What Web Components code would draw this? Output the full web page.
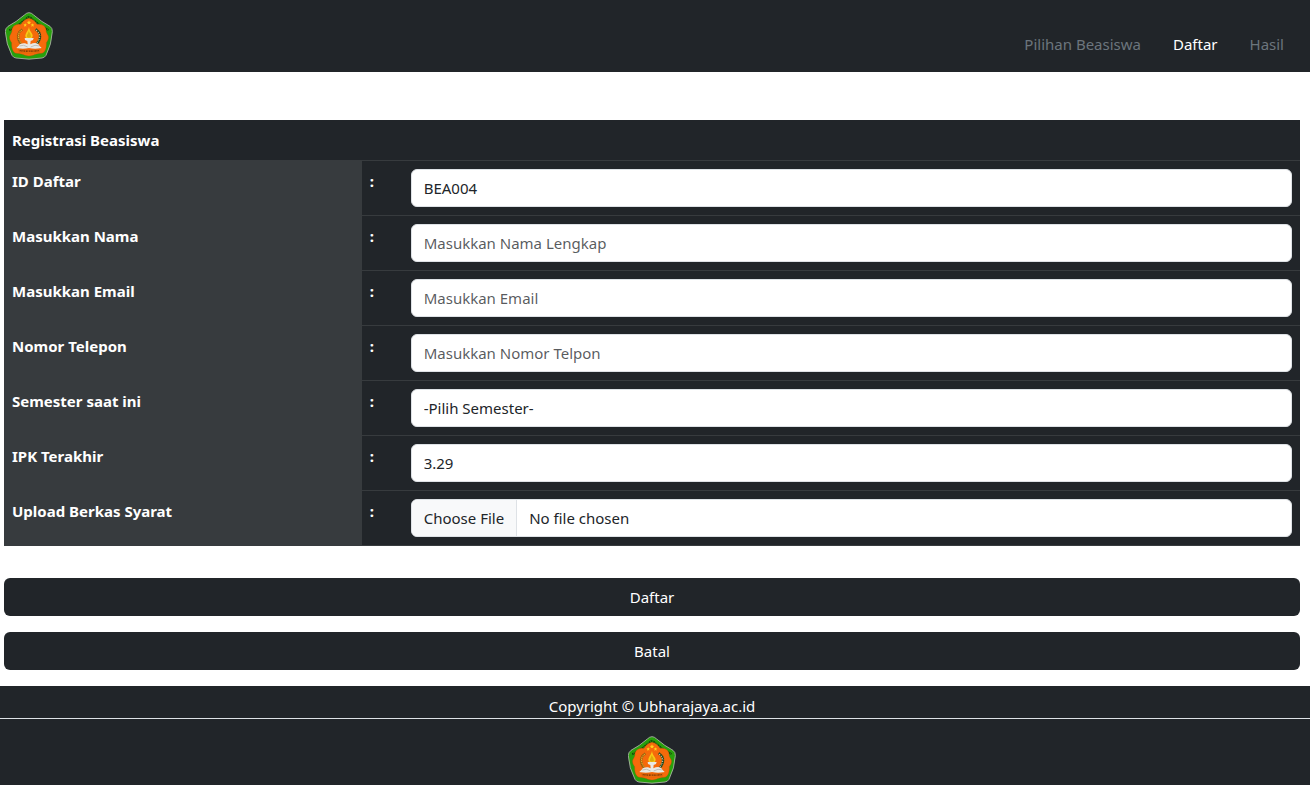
<!DOCTYPE html>
<html lang="id">
<head>
<meta charset="utf-8">
<meta name="viewport" content="width=device-width, initial-scale=1">
<title>Registrasi Beasiswa</title>
<style>
  body {
    margin: 0;
    background: #fff;
    color: #212529;
    font: 15px/24px "Noto Sans", "Open Sans", sans-serif;
    --dark: #212529;
    --panel: #373b3e;
    --line: #dee2e6;
    --muted: #6c757d;
  }
  main { padding: 48px 10px 16px 4px; }
</style>
</head>
<body>
<site-header>
  <nav-link href="#pilihan">Pilihan Beasiswa</nav-link>
  <nav-link href="#daftar" active>Daftar</nav-link>
  <nav-link href="#hasil">Hasil</nav-link>
</site-header>
<main>
  <registration-form><span slot="title">Registrasi Beasiswa</span></registration-form>
</main>
<site-footer>Copyright © Ubharajaya.ac.id</site-footer>

<script>
class BaseElement extends HTMLElement {
  constructor() {
    super();
    const t = document.createElement('template');
    t.innerHTML = '<style>*{box-sizing:border-box}</style>' + this.constructor.markup;
    this.attachShadow({ mode: 'open' }).append(t.content.cloneNode(true));
  }
}

class UniversityCrest extends BaseElement {
  static markup = `
  <style>:host{display:block;width:48px;height:48px} svg{display:block;width:100%;height:100%}</style>
  <svg viewBox="14 35 144 144" role="img" aria-label="Ubhara Jaya" fill="none">
    <path d="M86 37Q93 37 100 44Q124 65 149 78Q157 84 156 94Q154 132 137 165Q133 172 125 173Q86 180 47 173Q39 172 35 165Q17 132 15 94Q15 84 23 78Q48 65 72 44Q79 37 86 37Z" fill="#28a00c" stroke="#b4b5ae" stroke-width="2.5"/>
    <path d="M27 90Q60 72 86 48Q112 72 146 90" stroke="#143e0b" stroke-width="6" stroke-dasharray="4 2 2 2 5 2"/>
    <path d="M86 54C97 56 106 63 110 72C122 70 135 76 137 87C136 94 140 100 144 107C146 116 142 121 138 127C139 141 135 156 125 159C113 159 105 162 98 165C90 168 82 168 74 165C67 162 59 159 47 159C37 156 33 141 34 127C30 121 26 116 28 107C32 100 36 94 35 87C37 76 50 70 62 72C66 63 75 56 86 54Z" fill="#f56a0b" stroke="#a64f09" stroke-width="1"/>
    <path d="M86 60l2 4 5 1-4 3 1 4-4-2-4 2 1-4-4-3 5-1zM75 69l1 3 4 1-3 2 1 4-3-2-4 2 1-4-3-2 4-1zM97 69l1 3 4 1-3 2 1 4-3-2-4 2 1-4-3-2 4-1z" fill="#ffd01c"/>
    <path d="M66 88C50 96 49 116 63 131" stroke="#8b5d12" stroke-width="7" stroke-dasharray="4 1"/>
    <path d="M65 89C51 97 51 115 63 128" stroke="#e2b62a" stroke-width="3" stroke-dasharray="4 2"/>
    <path d="M106 87C123 96 123 116 109 131" stroke="#164c25" stroke-width="7" stroke-dasharray="5 1"/>
    <path d="M107 89C121 98 120 115 110 128" stroke="#e9e8d8" stroke-width="3" stroke-dasharray="3 5"/>
    <path d="M86 79C84 91 75 98 75 107Q75 115 86 116Q98 114 97 105C96 97 87 92 86 79Z" fill="#f7c817"/>
    <path d="M85 93C83 101 79 103 80 109Q85 115 92 109Q92 102 85 93Z" fill="#d9a90c"/>
    <path d="M73 113H100L98 119L91 122L90 132C101 126 114 127 117 136L124 143Q105 147 86 143Q67 147 48 143L55 136C60 127 75 127 82 132L81 122L74 119Z" fill="#e8e9e4"/>
    <path d="M57 137Q70 131 82 140M117 137Q104 131 91 140" stroke="#aaa9a3" stroke-width="2"/>
    <path d="M54 146Q86 152 119 146L117 156Q86 161 57 156Z" fill="#ef720c" stroke="#c85408" stroke-width="1"/>
    <path d="M58 151Q86 154 116 151" stroke="#6b2c05" stroke-width="4" stroke-dasharray="3 2 4 1 2 2"/>
  </svg>`;
}
customElements.define('university-crest', UniversityCrest);

class NavLink extends BaseElement {
  static markup = `
  <style>
    :host{display:block}
    a{display:block;padding:8px 16px;color:var(--muted);text-decoration:none}
    :host([active]) a{color:#fff}
  </style><a><slot></slot></a>`;
  connectedCallback() {
    const link = this.shadowRoot.querySelector('a');
    link.href = this.getAttribute('href');
    if (this.hasAttribute('active')) link.setAttribute('aria-current', 'page');
  }
}
customElements.define('nav-link', NavLink);

class SiteHeader extends BaseElement {
  static markup = `
  <style>
    :host{display:block;background:var(--dark)}
    header{display:flex;justify-content:space-between;padding:12px 10px 12px 5px}
    nav{display:flex;align-self:flex-end;margin-bottom:-4px}
  </style>
  <header><university-crest></university-crest><nav><slot></slot></nav></header>`;
}
customElements.define('site-header', SiteHeader);

class RegistrationForm extends BaseElement {
  static markup = `
  <style>
    :host{display:block}
    form{display:grid;gap:16px}
    table{width:100%;margin-bottom:16px;table-layout:fixed;border-spacing:0;background:var(--dark);color:#fff}
    .name{width:27.6%} .colon{width:41px}
    th,td{padding:8px;text-align:left;vertical-align:top;border-bottom:1px solid var(--panel);font-weight:700}
    tbody th{background:var(--panel)}
    label{display:block}
    input,select{display:block;width:100%;height:38px;margin:0;padding:6px 12px;border:1px solid var(--line);border-radius:6px;
      background:#fff;color:#212529;font:inherit;font-weight:400;appearance:none}
    input::placeholder{color:rgba(33,37,41,.75);opacity:1}
    input[type=file]{overflow:hidden}
    input::file-selector-button{margin:-6px 12px -6px -12px;padding:6px 12px;border:0 solid var(--line);border-right-width:1px;
      background:#f8f9fa;color:#212529;font:inherit}
    button{height:38px;padding:6px 12px;border:0;border-radius:6px;background:var(--dark);color:#fff;font:inherit}
  </style>
  <form>
    <table>
      <colgroup><col class="name"><col class="colon"><col></colgroup>
      <thead><tr><th colspan="3"><slot name="title"></slot></th></tr></thead>
      <tbody>
        <tr><th scope="row"><label for="id">ID Daftar</label></th><td>:</td><td><input id="id" value="BEA004" readonly></td></tr>
        <tr><th scope="row"><label for="nama">Masukkan Nama</label></th><td>:</td><td><input id="nama" placeholder="Masukkan Nama Lengkap"></td></tr>
        <tr><th scope="row"><label for="email">Masukkan Email</label></th><td>:</td><td><input id="email" type="email" placeholder="Masukkan Email"></td></tr>
        <tr><th scope="row"><label for="telepon">Nomor Telepon</label></th><td>:</td><td><input id="telepon" type="tel" placeholder="Masukkan Nomor Telpon"></td></tr>
        <tr><th scope="row"><label for="semester">Semester saat ini</label></th><td>:</td><td><select id="semester"><option>-Pilih Semester-</option><option>1</option><option>2</option><option>3</option><option>4</option><option>5</option><option>6</option><option>7</option><option>8</option></select></td></tr>
        <tr><th scope="row"><label for="ipk">IPK Terakhir</label></th><td>:</td><td><input id="ipk" value="3.29" readonly></td></tr>
        <tr><th scope="row"><label for="berkas">Upload Berkas Syarat</label></th><td>:</td><td><input id="berkas" type="file"></td></tr>
      </tbody>
    </table>
    <button type="submit">Daftar</button>
    <button type="reset">Batal</button>
  </form>`;
}
customElements.define('registration-form', RegistrationForm);

class SiteFooter extends BaseElement {
  static markup = `
  <style>
    :host{display:block;background:var(--dark);color:#fff}
    p{margin:0;padding:8px 6px 0 0;text-align:center;border-bottom:1px solid var(--line)}
    div{display:flex;justify-content:center;padding:17px 6px 1px 0}
  </style>
  <footer><p><slot></slot></p><div><university-crest></university-crest></div></footer>`;
}
customElements.define('site-footer', SiteFooter);
</script>
</body>
</html>
